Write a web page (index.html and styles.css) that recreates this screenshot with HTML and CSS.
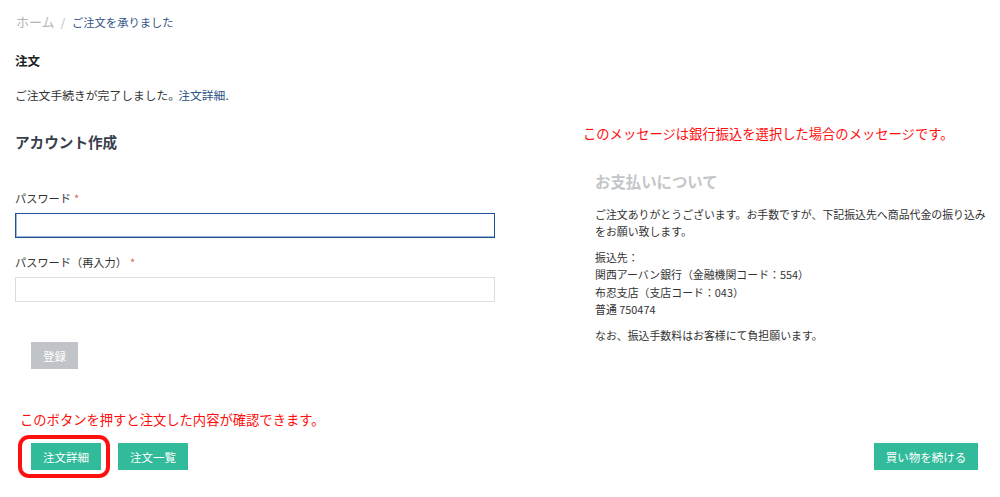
FILE: index.html
```html
<!DOCTYPE html>
<html lang="ja">
<head>
<meta charset="utf-8">
<title>ご注文を承りました</title>
<link rel="stylesheet" href="styles.css">
</head>
<body>
<div class="page">
  <nav class="breadcrumb">
    <span class="crumb-home">ホーム</span><span class="crumb-sep">/</span><span class="crumb-current">ご注文を承りました</span>
  </nav>
  <h2 class="section-title">注文</h2>
  <p class="complete">ご注文手続きが完了しました。<a class="link" href="#">注文詳細</a>.</p>

  <div class="columns">
    <div class="col-left">
      <h3 class="account-title">アカウント作成</h3>
      <label class="field-label">パスワード<span class="req">*</span></label>
      <input class="field-input focused" type="password">
      <label class="field-label second">パスワード（再入力）<span class="req">*</span></label>
      <input class="field-input" type="password">
      <button class="btn btn-disabled">登録</button>
    </div>
    <div class="col-right">
      <p class="note-red">このメッセージは銀行振込を選択した場合のメッセージです。</p>
      <div class="payment">
        <h3 class="payment-title">お支払いについて</h3>
        <p class="pay-text">ご注文ありがとうございます。お手数ですが、下記振込先へ商品代金の振り込みをお願い致します。</p>
        <p class="pay-text gap">振込先：<br>関西アーバン銀行（金融機関コード：554）<br>布忍支店（支店コード：043）<br>普通 750474</p>
        <p class="pay-text gap2">なお、振込手数料はお客様にて負担願います。</p>
      </div>
    </div>
  </div>

  <p class="note-red bottom-note">このボタンを押すと注文した内容が確認できます。</p>
  <div class="actions">
    <div class="actions-left">
      <div class="ring-wrap"><button class="btn btn-green">注文詳細</button></div>
      <button class="btn btn-green">注文一覧</button>
    </div>
    <button class="btn btn-green wide">買い物を続ける</button>
  </div>
</div>
</body>
</html>
```

FILE: styles.css
```css
* { box-sizing: border-box; }
html, body { margin: 0; padding: 0; background: #fff; }
body {
  font-family: "Noto Sans CJK JP", "Noto Sans", "Liberation Sans", sans-serif;
  color: #333;
  font-size: 12px;
}
.page { padding: 0 22px 30px 15px; }
.breadcrumb {
  padding-top: 14px;
  height: 30px;
  line-height: 16px;
  padding-left: 1px;
}
.crumb-home { color: #b4b4b4; font-size: 13px; }
.crumb-sep { color: #b4b4b4; font-size: 11px; margin: 0 7px 0 6px; }
.crumb-current { color: #34568a; font-size: 11.3px; }
.section-title {
  margin: 22px 0 0;
  font-size: 12.5px;
  line-height: 18px;
  font-weight: bold;
  color: #222;
}
.complete {
  margin: 16px 0 0;
  font-size: 11.8px;
  line-height: 18px;
  color: #333;
}
.link { color: #2c5487; text-decoration: none; margin-left: -2px; }
.columns { display: flex; }
.col-left { width: 480px; display: flex; flex-direction: column; align-items: flex-start; }
.account-title {
  margin: 27px 0 0;
  font-size: 14.6px;
  line-height: 22px;
  font-weight: bold;
  color: #38404c;
}
.field-label {
  margin-top: 37px;
  font-size: 11.2px;
  line-height: 16px;
  color: #333;
}
.field-label.second { margin-top: 16px; }
.req { color: #e0675f; margin-left: 3px; font-size: 11px; }
.field-input {
  margin-top: 7px;
  width: 480px;
  height: 25px;
  border: 1px solid #dcdcdc;
  background: #fff;
  outline: none;
}
.field-input.focused {
  border-color: #1f5190;
  box-shadow: inset 1px -1px 0 #9bb8dc;
}
.btn {
  border: none;
  height: 27px;
  padding: 0;
  font-family: inherit;
  font-size: 11.5px;
  color: #fff;
  width: 70px;
  display: block;
}
.btn-disabled {
  margin: 40px 0 0 16px;
  width: 47px;
  background: #c0c4c8;
}
.btn-green { background: #31bb9b; }
.btn.wide { width: 104px; }
.col-right { margin-left: 88px; }
.note-red {
  margin: 0;
  color: #ff0d0d;
  font-size: 13.3px;
  line-height: 18px;
}
.col-right .note-red { margin-top: 21px; }
.payment { padding-left: 12px; width: 412px; }
.payment-title {
  margin: 28px 0 0;
  font-size: 15.4px;
  line-height: 20px;
  font-weight: bold;
  color: #c3c6c9;
}
.pay-text {
  margin: 14.5px 0 0;
  font-size: 10.9px;
  line-height: 17.3px;
  color: #333;
}
.pay-text.gap { margin-top: 9px; }
.pay-text.gap2 { margin-top: 8.5px; }
.bottom-note { margin: 42px 0 0 5px; }
.actions {
  margin: 14px 0 0;
  display: flex;
  justify-content: space-between;
  align-items: flex-start;
}
.actions-left { display: flex; gap: 17px; padding-left: 16px; align-items: flex-start; }
.ring-wrap { position: relative; display: block; width: 70px; height: 27px; }
.ring-wrap::after {
  content: "";
  position: absolute;
  left: -13px;
  right: -9px;
  top: -8px;
  bottom: -8px;
  border: 4px solid #ff1010;
  border-radius: 11px;
  pointer-events: none;
}
```
